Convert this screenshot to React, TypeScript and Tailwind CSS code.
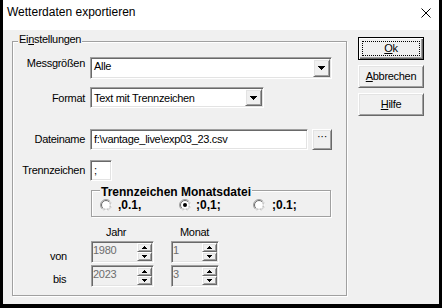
import React from 'react';

const raised =
  'border border-t-white border-l-white border-r-[#696969] border-b-[#696969] shadow-[inset_1px_1px_0_#e3e3e3,inset_-1px_-1px_0_#a0a0a0]';
const sunken =
  'border border-t-[#a0a0a0] border-l-[#a0a0a0] border-r-white border-b-white shadow-[inset_1px_1px_0_#696969,inset_-1px_-1px_0_#e3e3e3]';
const etched = 'border border-[#a0a0a0] shadow-[inset_1px_1px_0_#fff,1px_1px_0_#fff]';

function ComboArrow() {
  return (
    <svg width="7" height="4" viewBox="0 0 7 4" shapeRendering="crispEdges">
      <path d="M0 0h7v1h-1v1h-1v1h-1v1h-1v-1h-1v-1h-1v-1h-1z" fill="#000" />
    </svg>
  );
}

function SpinUp() {
  return (
    <svg width="5" height="3" viewBox="0 0 5 3" shapeRendering="crispEdges">
      <path d="M2 0h1v1h1v1h1v1H0V2h1V1h1z" fill="#000" />
    </svg>
  );
}

function SpinDown() {
  return (
    <svg width="5" height="3" viewBox="0 0 5 3" shapeRendering="crispEdges">
      <path d="M0 0h5v1H4v1H3v1H2V2H1V1H0z" fill="#000" />
    </svg>
  );
}

function Radio({ checked }: { checked?: boolean }) {
  return (
    <svg width="12" height="12" viewBox="0 0 12 12" className="shrink-0">
      <circle cx="6" cy="6" r="5.5" fill="none" stroke="#a0a0a0" />
      <path d="M9.89 2.11A5.5 5.5 0 0 1 2.11 9.89" fill="none" stroke="#fff" />
      <circle cx="6" cy="6" r="4.5" fill="#fff" stroke="#696969" />
      <path d="M9.18 2.82A4.5 4.5 0 0 1 2.82 9.18" fill="none" stroke="#e3e3e3" />
      {checked && <circle cx="6" cy="6" r="2" fill="#000" />}
    </svg>
  );
}

function Combo({ className, value, pad }: { className: string; value: string; pad: string }) {
  return (
    <div className={`${sunken} bg-white flex ${className}`}>
      <div className={`flex-1 pl-[3px] ${pad}`}>{value}</div>
      <div className={`${raised} bg-[#f0f0f0] w-[17px] my-[1px] mr-[1px] flex items-center justify-center`}>
        <ComboArrow />
      </div>
    </div>
  );
}

function Spinner({ className, value }: { className: string; value: string }) {
  return (
    <div className={`${sunken} bg-[#f0f0f0] h-[22px] flex ${className}`}>
      <div className="flex-1 pl-[1px] pt-[2px] text-[#6d6d6d]">{value}</div>
      <div className="flex flex-col w-[15px] my-[1px] mr-[1px]">
        <div className={`${raised} bg-[#f0f0f0] flex-1 flex items-center justify-center`}>
          <SpinUp />
        </div>
        <div className={`${raised} bg-[#f0f0f0] flex-1 flex items-center justify-center`}>
          <SpinDown />
        </div>
      </div>
    </div>
  );
}

function Button({ children }: { children: React.ReactNode }) {
  return (
    <div className={`${raised} w-[66px] h-[23px] flex items-center justify-center`}>{children}</div>
  );
}

export default function App() {
  return (
    <div className="w-[442px] h-[308px] flex flex-col bg-[#f0f0f0] border-x-[3px] border-b-[4px] border-black text-[11px] leading-[13px] tracking-[-0.3px] text-black font-['Liberation_Sans',Arial,sans-serif] overflow-hidden">
      {/* title bar */}
      <div className="h-[30px] shrink-0 bg-white flex items-start justify-between pl-[4px] pr-[8px]">
        <span className="text-[12px] leading-[14px] tracking-normal mt-[5px]">Wetterdaten exportieren</span>
        <svg className="mt-[8px]" width="10" height="10" viewBox="0 0 10 10">
          <path d="M0.5 0.5l9 9M9.5 0.5l-9 9" stroke="#000" strokeWidth="1" />
        </svg>
      </div>

      <div className="flex items-start pl-[9px] pt-[7px]">
        {/* Einstellungen */}
        <div className={`relative mt-[4px] w-[335px] h-[255px] ${etched}`}>
          <span className="absolute left-[5px] top-[-9px] px-[1px] bg-[#f0f0f0]">
            Ei<u>n</u>stellungen
          </span>

          <div className="flex flex-col">
            <div className="flex items-start mt-[15px] h-[22px]">
              <span className="w-[72px] mr-[5px] text-right">Messgrößen</span>
              <Combo className="w-[242px] h-[22px]" value="Alle" pad="pt-[2px]" />
            </div>

            <div className="flex items-start mt-[8px] h-[21px]">
              <span className="w-[72px] mr-[5px] pt-[5px] text-right">Format</span>
              <Combo className="w-[174px] h-[21px]" value="Text mit Trennzeichen" pad="pt-[4px]" />
            </div>

            <div className="flex items-start mt-[21px] h-[21px]">
              <span className="w-[72px] mr-[5px] pt-[4px] text-right">Dateiname</span>
              <div className={`${sunken} bg-white w-[218px] h-[21px] pl-[3px] pt-[3px]`}>
                f:\vantage_live\exp03_23.csv
              </div>
              <div className={`${raised} ml-[4px] w-[20px] h-[21px] flex justify-center leading-[11px] pt-[1px]`}>
                ···
              </div>
            </div>

            <div className="flex items-start mt-[10px] h-[21px]">
              <span className="w-[72px] mr-[5px] pt-[4px] text-right">Trennzeichen</span>
              <div className={`${sunken} bg-white w-[22px] h-[21px] pl-[3px] pt-[3px]`}>;</div>
            </div>

            {/* Trennzeichen Monatsdatei */}
            <div className={`relative mt-[9px] ml-[78px] w-[240px] h-[27px] ${etched}`}>
              <span className="absolute left-[8px] top-[-6px] px-[1px] bg-[#f0f0f0] text-[12px] leading-[14px] tracking-normal font-bold">
                Trennzeichen Monatsdatei
              </span>
              <div className="flex pl-[8px] pt-[8px] text-[12px] leading-[14px] tracking-normal font-bold">
                <div className="w-[79px] h-[12px] flex items-center gap-[6px]">
                  <Radio />
                  <span>,0.1,</span>
                </div>
                <div className="w-[74px] h-[12px] flex items-center gap-[5px]">
                  <Radio checked />
                  <span>;0,1;</span>
                </div>
                <div className="h-[12px] flex items-center gap-[7px]">
                  <Radio />
                  <span>;0.1;</span>
                </div>
              </div>
            </div>

            <div className="flex mt-[9px] h-[13px] pl-[93px]">
              <span className="w-[74px]">Jahr</span>
              <span>Monat</span>
            </div>

            <div className="flex items-start mt-[2px]">
              <span className="w-[78px] pl-[37px] pt-[9px]">von</span>
              <Spinner className="w-[63px]" value="1980" />
              <Spinner className="w-[48px] ml-[17px]" value="1" />
            </div>

            <div className="flex items-start mt-[2px]">
              <span className="w-[78px] pl-[40px] pt-[8px]">bis</span>
              <Spinner className="w-[63px]" value="2023" />
              <Spinner className="w-[48px] ml-[17px]" value="3" />
            </div>
          </div>
        </div>

        {/* buttons */}
        <div className="flex flex-col gap-[5px] ml-[11px]">
          <div className="w-[66px] h-[23px] flex border border-black shadow-[inset_1px_1px_0_#fff,inset_-1px_-1px_0_#696969,inset_-2px_-2px_0_#a0a0a0]">
            <div className="flex-1 m-[3px] border border-dotted border-black flex items-center justify-center">
              <span>
                <u>O</u>k
              </span>
            </div>
          </div>
          <Button>
            <span>
              <u>A</u>bbrechen
            </span>
          </Button>
          <Button>
            <span>
              <u>H</u>ilfe
            </span>
          </Button>
        </div>
      </div>
    </div>
  );
}
